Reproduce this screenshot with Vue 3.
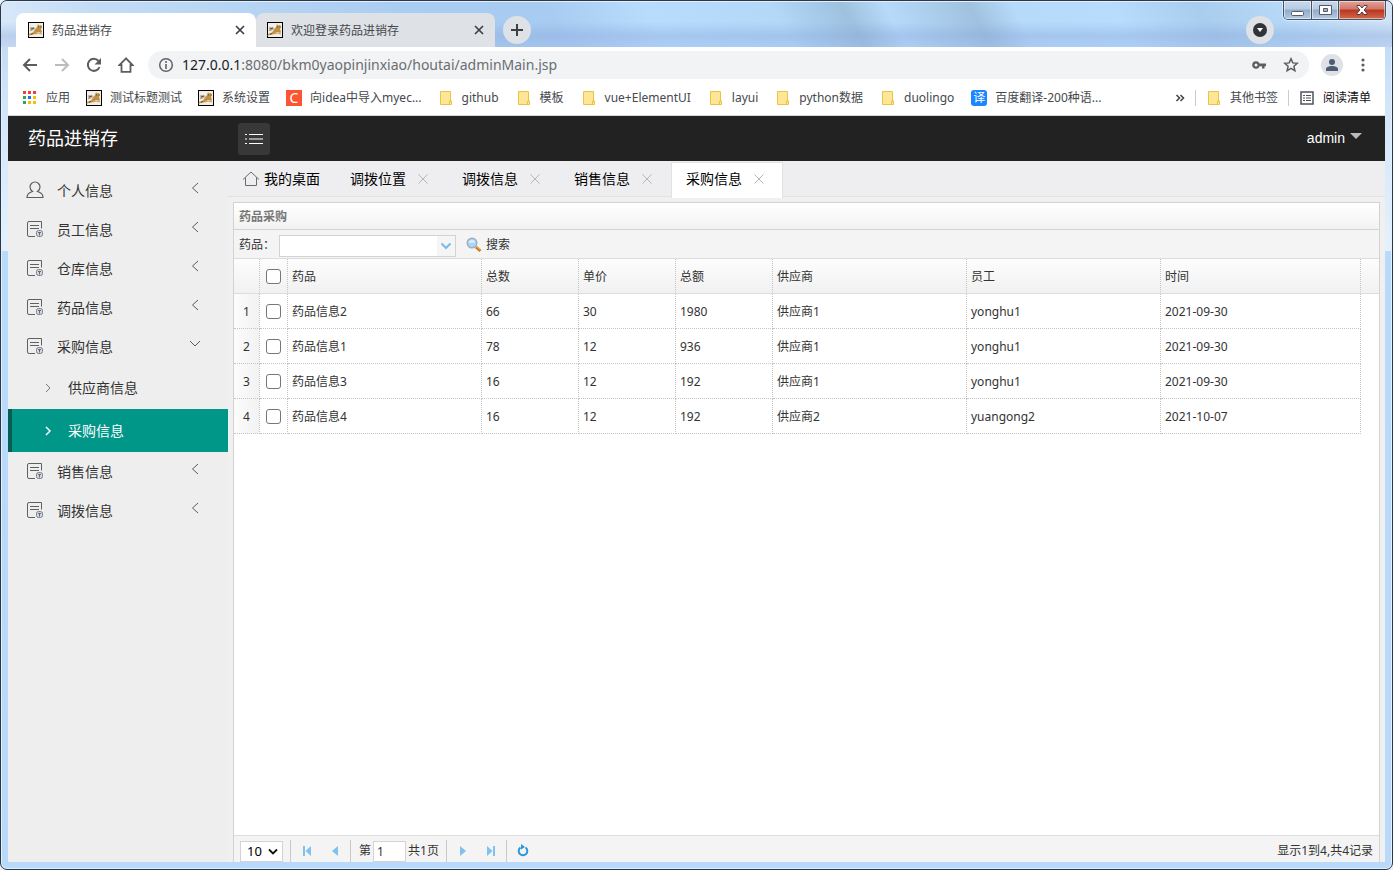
<script setup>
import { ref } from 'vue'

const browserTabs = [
  { title: '药品进销存', active: true },
  { title: '欢迎登录药品进销存', active: false },
]

const bookmarks = [
  { icon: 'apps', label: '应用' },
  { icon: 'cat', label: '测试标题测试' },
  { icon: 'cat', label: '系统设置' },
  { icon: 'c', label: '向idea中导入myec...' },
  { icon: 'folder', label: 'github' },
  { icon: 'folder', label: '模板' },
  { icon: 'folder', label: 'vue+ElementUI' },
  { icon: 'folder', label: 'layui' },
  { icon: 'folder', label: 'python数据' },
  { icon: 'folder', label: 'duolingo' },
  { icon: 'yi', label: '百度翻译-200种语...' },
]

const appDots = [
  '#ea4335', '#ea4335', '#ea4335',
  '#34a853', '#1a73e8', '#fbbc04',
  '#34a853', '#fbbc04', '#fbbc04',
]

const menu = [
  { label: '个人信息', icon: 'user' },
  { label: '员工信息', icon: 'doc' },
  { label: '仓库信息', icon: 'doc' },
  { label: '药品信息', icon: 'doc' },
  {
    label: '采购信息',
    icon: 'doc',
    open: true,
    children: [
      { label: '供应商信息' },
      { label: '采购信息', active: true },
    ],
  },
  { label: '销售信息', icon: 'doc' },
  { label: '调拨信息', icon: 'doc' },
]

const pageTabs = [
  { label: '调拨位置' },
  { label: '调拨信息' },
  { label: '销售信息' },
  { label: '采购信息', active: true },
]

const columns = ['药品', '总数', '单价', '总额', '供应商', '员工', '时间']
const rows = [
  ['药品信息2', '66', '30', '1980', '供应商1', 'yonghu1', '2021-09-30'],
  ['药品信息1', '78', '12', '936', '供应商1', 'yonghu1', '2021-09-30'],
  ['药品信息3', '16', '12', '192', '供应商1', 'yonghu1', '2021-09-30'],
  ['药品信息4', '16', '12', '192', '供应商2', 'yuangong2', '2021-10-07'],
]

const url = ref('127.0.0.1:8080/bkm0yaopinjinxiao/houtai/adminMain.jsp')
const drug = ref('')
const page = ref('1')
const pageSize = ref('10')
</script>

<template>
  <div class="window">
    <svg class="defs" width="0" height="0" aria-hidden="true">
      <symbol id="cat" viewBox="0 0 16 16">
        <rect width="16" height="16" fill="#000" />
        <rect x="1" y="1" width="14" height="14" fill="#f1efea" />
        <path d="M2 5l4 0 2 2-4 2-2 0z" fill="#b9b9b6" />
        <path d="M9 5l1-3 1 1.500 2-.5 1 2-1 2 1 3-1 1-2-1-2 .5-3 2-3 0-1 1-2 0 2-2 3-1z" fill="#c08f42" />
        <path d="M7 12l3-1 4 1M2 9l3-2" stroke="#d0a04a" fill="none" />
        <path d="M10 5h1M12.500 5h1M3 7l3-1M3 12.500l2-1" stroke="#5f4c30" />
      </symbol>
      <symbol id="folder" viewBox="0 0 16 16">
        <path d="M2.500 1.500h10v9.500h1v3.500h-11z" fill="#ffe694" stroke="#e8c547" />
        <path d="M11.500 14v-3h2" fill="none" stroke="#e8c547" />
      </symbol>
      <symbol id="doc" viewBox="0 0 18 18">
        <path d="M15.500 8.500V1.500H3A1.500 1.500 0 0 0 1.500 3v12A1.500 1.500 0 0 0 3 16.500h6M4 5.500h9M4 8.500h9" fill="none" stroke="#606060" />
        <rect x="10.500" y="10.500" width="6" height="6" rx="2" fill="#d3d8e0" stroke="#7b828e" />
        <path d="M12 12.500h3M13.500 12v3.500" stroke="#686868" />
      </symbol>
      <symbol id="user" viewBox="0 0 18 18">
        <path d="M6.500 10.500C5 9.500 4 8 4 6a5 5 0 0 1 10 0c0 2-1 3.500-2.500 4.500C15 11.500 17 13.500 17 16.500H1c0-3 2-5 5.500-6z" fill="none" stroke="#5d5d5d" stroke-width="1.200" />
      </symbol>
    </svg>

    <header class="strip">
      <nav class="browser-tabs" aria-label="浏览器标签">
        <div v-for="t in browserTabs" :key="t.title" class="browser-tab" :class="{ active: t.active }">
          <svg class="i16"><use href="#cat" /></svg>
          <span>{{ t.title }}</span>
          <button class="plain" aria-label="关闭标签">
            <svg width="16" height="16" viewBox="0 0 16 16"><path d="M4 4l8 8M12 4l-8 8" stroke="#3c4043" stroke-width="1.700" /></svg>
          </button>
        </div>
      </nav>
      <button class="round" aria-label="新标签页">
        <svg width="14" height="14" viewBox="0 0 14 14"><path d="M7 1v12M1 7h12" stroke="#3c4043" stroke-width="2" /></svg>
      </button>
      <button class="round search-tabs" aria-label="搜索标签页">
        <svg width="14" height="14" viewBox="0 0 14 14"><circle cx="7" cy="7" r="7" fill="#303438" /><path d="M4 5h6l-3 4z" fill="#fff" /></svg>
      </button>
      <div class="controls">
        <button class="ctl" aria-label="最小化">
          <svg width="13" height="16" viewBox="0 0 13 16"><rect x=".5" y="9.500" width="12" height="4" rx="1" fill="#fff" stroke="#535b6b" /></svg>
        </button>
        <button class="ctl" aria-label="最大化">
          <svg width="13" height="16" viewBox="0 0 13 16"><path d="M.5 3.500h12v9h-12z" fill="#fff" stroke="#535b6b" /><path d="M4.500 6.500h4v3h-4z" fill="#9fb4cd" stroke="#535b6b" /></svg>
        </button>
        <button class="ctl close" aria-label="关闭">
          <svg width="14" height="16" viewBox="0 0 14 16"><path d="M2 3.500h3l2 2.500 2-2.500h3v1L9.200 8l2.800 3.500v1H9L7 10l-2 2.500H2v-1L4.800 8 2 4.500z" fill="#fff" stroke="#53383f" /></svg>
        </button>
      </div>
    </header>

    <div class="client">
      <div class="toolbar">
        <button class="plain" aria-label="后退"><svg width="16" height="16" viewBox="0 0 16 16"><path d="M15 8H2M8 2L2 8l6 6" fill="none" stroke="#5a5e63" stroke-width="2" /></svg></button>
        <button class="plain" aria-label="前进"><svg width="16" height="16" viewBox="0 0 16 16"><path d="M1 8h13M8 2l6 6-6 6" fill="none" stroke="#babcbe" stroke-width="2" /></svg></button>
        <button class="plain" aria-label="刷新"><svg width="16" height="16" viewBox="0 0 16 16"><path d="M13.500 10A6 6 0 1 1 12.500 4" fill="none" stroke="#5a5e63" stroke-width="2" /><path d="M15 1v6.500H8.500z" fill="#5a5e63" /></svg></button>
        <button class="plain" aria-label="主页"><svg width="16" height="16" viewBox="0 0 16 16"><path d="M8 1.300L1.500 8H3.500v6.800h9V8h2z" fill="none" stroke="#5a5e63" stroke-width="1.800" /></svg></button>
        <div class="omnibox">
          <svg width="16" height="16" viewBox="0 0 16 16"><circle cx="8" cy="8" r="6.300" fill="none" stroke="#5f6368" stroke-width="1.500" /><path d="M8 4v2M8 7v5" stroke="#5f6368" stroke-width="1.600" /></svg>
          <label class="url">
            <input v-model="url" aria-label="地址" />
            <span class="shown" aria-hidden="true"><b>{{ url.slice(0, 9) }}</b>{{ url.slice(9) }}</span>
          </label>
          <button class="plain" aria-label="密码"><svg width="16" height="16" viewBox="0 0 16 16"><path d="M5 4.200a3.800 3.800 0 1 0 3.600 5H11v2.300h2.500V9.200H15V6.500H8.600A3.800 3.800 0 0 0 5 4.200zm0 2.300a1.500 1.500 0 1 1 0 3 1.500 1.500 0 0 1 0-3z" fill="#5a5e63" /></svg></button>
          <button class="plain star" aria-label="收藏"><svg width="16" height="16" viewBox="0 0 16 16"><path d="M8 1.800l1.800 4.100 4.500.4-3.400 3 1 4.400L8 11.400l-3.900 2.300 1-4.400-3.400-3 4.500-.4z" fill="none" stroke="#5a5e63" stroke-width="1.500" /></svg></button>
        </div>
        <button class="avatar" aria-label="用户"><svg width="14" height="14" viewBox="0 0 14 14"><circle cx="7" cy="4" r="3" fill="#4f5b73" /><path d="M1 13v-2c0-2 3-3 6-3s6 1 6 3v2z" fill="#4f5b73" /></svg></button>
        <button class="plain" aria-label="菜单"><svg width="16" height="16" viewBox="0 0 16 16"><g fill="#5a5e63"><circle cx="8" cy="3" r="1.600" /><circle cx="8" cy="8" r="1.600" /><circle cx="8" cy="13" r="1.600" /></g></svg></button>
      </div>

      <nav class="bookmarks" aria-label="书签">
        <a v-for="(b, i) in bookmarks" :key="i" href="#" :class="b.icon">
          <svg v-if="b.icon === 'apps'" class="i16" viewBox="0 0 16 16">
            <rect v-for="(c, n) in appDots" :key="n" :x="1 + (n % 3) * 5" :y="1 + Math.floor(n / 3) * 5" width="3" height="3" :fill="c" />
          </svg>
          <span v-else-if="b.icon === 'c'" class="badge red">C</span>
          <span v-else-if="b.icon === 'yi'" class="badge blue">译</span>
          <svg v-else class="i16"><use :href="'#' + b.icon" /></svg>
          <span>{{ b.label }}</span>
        </a>
        <div class="right">
          <button class="plain" aria-label="更多书签"><svg width="10" height="10" viewBox="0 0 10 10"><path d="M1.500 2l3 3-3 3M5.500 2l3 3-3 3" fill="none" stroke="#45494d" stroke-width="1.600" /></svg></button>
          <i class="rule"></i>
          <a href="#"><svg class="i16"><use href="#folder" /></svg><span>其他书签</span></a>
          <i class="rule"></i>
          <a href="#"><svg class="i16" viewBox="0 0 16 16"><rect x="2" y="2" width="12" height="12" fill="none" stroke="#4f5358" stroke-width="1.500" /><path d="M4 5.500h2M7 5.500h5M4 8h2M7 8h5M4 10.500h2M7 10.500h5" stroke="#4f5358" stroke-width="1.200" /></svg><span class="dark">阅读清单</span></a>
        </div>
      </nav>

      <div class="app-head">
        <h1>药品进销存</h1>
        <button class="burger" aria-label="折叠菜单">
          <svg width="18" height="12" viewBox="0 0 18 12"><path d="M4 1.500h14M4 6h14M4 10.500h14M0 1.500h2M0 6h2M0 10.500h2" stroke="#fff" stroke-width="1.200" /></svg>
        </button>
        <button class="admin">admin <i></i></button>
      </div>

      <div class="body">
        <aside>
          <ul>
            <li v-for="m in menu" :key="m.label">
              <a class="item" href="#">
                <svg class="i18"><use :href="'#' + m.icon" /></svg>
                <span>{{ m.label }}</span>
                <svg class="arrow" width="12" height="12" viewBox="0 0 12 12">
                  <path :d="m.open ? 'M1 3l5 5 5-5' : 'M9 1L3.500 6 9 11'" fill="none" stroke="#5a5a5a" />
                </svg>
              </a>
              <ul v-if="m.children">
                <li v-for="c in m.children" :key="c.label">
                  <a class="sub" :class="{ active: c.active }" href="#">
                    <svg width="8" height="10" viewBox="0 0 8 10"><path d="M2 1l4 4-4 4" fill="none" /></svg>
                    <span>{{ c.label }}</span>
                  </a>
                </li>
              </ul>
            </li>
          </ul>
        </aside>

        <main>
          <nav class="page-tabs" aria-label="页面标签">
            <a href="#" class="home">
              <svg width="18" height="16" viewBox="0 0 18 16"><path d="M1 8.500L9 1l8 7.500M3.500 6.500v8h11v-8" fill="none" stroke="#6b6b6b" /></svg>
              <span>我的桌面</span>
            </a>
            <div v-for="t in pageTabs" :key="t.label" class="page-tab" :class="{ active: t.active }">
              <a href="#">{{ t.label }}</a>
              <button class="plain" :aria-label="'关闭' + t.label">
                <svg width="14" height="14" viewBox="0 0 14 14"><path d="M2.500 2.500l9 9M11.500 2.500l-9 9" stroke="#b5b5b5" /></svg>
              </button>
            </div>
          </nav>

          <section class="panel">
            <h2>药品采购</h2>
            <form class="filter" @submit.prevent>
              <label for="drug">药品：</label>
              <div class="combo">
                <input id="drug" v-model="drug" type="text" />
                <button type="button" aria-label="展开"><svg width="12" height="8" viewBox="0 0 12 8"><path d="M1.500 1.500L6 6l4.500-4.500" fill="none" stroke="#74bdf0" stroke-width="2" /></svg></button>
              </div>
              <button type="submit" class="search">
                <svg width="16" height="16" viewBox="0 0 16 16"><path d="M10 10l4.500 4" stroke="#c9761c" stroke-width="3" /><path d="M10.500 9.500l4 3.500" stroke="#f3bd61" stroke-width="1" /><circle cx="6" cy="6" r="4.800" fill="#a9d7fb" stroke="#a3adb8" stroke-width="1.400" /><path d="M3 5.500a3 2.300 0 0 1 6 0z" fill="#e4f4ff" /></svg>
                <span>搜索</span>
              </button>
            </form>

            <div class="grid">
              <table>
                <colgroup>
                  <col class="w-num" /><col class="w-chk" /><col class="w-wide" /><col class="w-slim" /><col class="w-slim" /><col class="w-slim" /><col class="w-wide" /><col class="w-wide" /><col /><col class="w-end" />
                </colgroup>
                <thead>
                  <tr>
                    <th></th>
                    <th class="chk"><input type="checkbox" aria-label="全选" /></th>
                    <th v-for="c in columns" :key="c">{{ c }}</th>
                    <th class="end"></th>
                  </tr>
                </thead>
                <tbody>
                  <tr v-for="(r, i) in rows" :key="i">
                    <td class="num">{{ i + 1 }}</td>
                    <td class="chk"><input type="checkbox" :aria-label="'选择' + r[0]" /></td>
                    <td v-for="(v, n) in r" :key="n">{{ v }}</td>
                    <td class="end"></td>
                  </tr>
                </tbody>
              </table>
            </div>

            <footer class="pager">
              <div class="size">
                <select v-model="pageSize" aria-label="每页条数"><option>10</option><option>20</option><option>50</option></select>
                <svg width="10" height="7" viewBox="0 0 10 7"><path d="M1 1.500l4 4 4-4" fill="none" stroke="#111" stroke-width="1.800" /></svg>
              </div>
              <i class="bar"></i>
              <button class="plain" aria-label="首页"><svg width="16" height="16" viewBox="0 0 16 16"><path d="M4 3h2v10H4zM12 3v10L6.500 8z" fill="#80c1ee" /></svg></button>
              <button class="plain" aria-label="上一页"><svg width="16" height="16" viewBox="0 0 16 16"><path d="M11 3v10L5 8z" fill="#80c1ee" /></svg></button>
              <i class="bar"></i>
              <label class="page">第<input v-model="page" type="text" /></label>
              <span class="total">共1页</span>
              <i class="bar"></i>
              <button class="plain" aria-label="下一页"><svg width="16" height="16" viewBox="0 0 16 16"><path d="M5 3v10l6-5z" fill="#80c1ee" /></svg></button>
              <button class="plain" aria-label="末页"><svg width="16" height="16" viewBox="0 0 16 16"><path d="M10 3h2v10h-2zM4 3v10l5.500-5z" fill="#80c1ee" /></svg></button>
              <i class="bar"></i>
              <button class="plain" aria-label="刷新列表"><svg width="16" height="16" viewBox="0 0 16 16"><path d="M5.500 4.500a4.300 4.300 0 1 0 5 0" fill="none" stroke="#2b95dd" stroke-width="2" /><path d="M6 1v5.500L10 4z" fill="#2b95dd" /></svg></button>
              <span class="info">显示1到4,共4记录</span>
            </footer>
          </section>
        </main>
      </div>
    </div>
  </div>
</template>

<style>
body {
  margin: 0;
  background: #e9f0f7;
}
</style>

<style scoped>
* {
  box-sizing: border-box;
}
.window {
  display: flex;
  flex-direction: column;
  height: 100vh;
  padding: 0 7px 7px;
  overflow: hidden;
  border: 1px solid #2b3648;
  border-radius: 7px;
  box-shadow: inset 0 0 0 1px #e3f1ff;
  background:
    linear-gradient(180deg, #c3dcf5 0, #d3e6f9 60px, #eaf4fe 250px, transparent 250px) 0 46px / 100% 204px no-repeat,
    linear-gradient(#b8dafb, #b8d9fa);
  font-family: "Noto Sans", "Noto Sans CJK SC", sans-serif;
  font-size: 12px;
  line-height: 18px;
  color: #333;
}
.defs {
  position: absolute;
}
button,
input,
select {
  font: inherit;
  color: inherit;
}
button {
  padding: 0;
  border: 0;
  background: none;
}
svg {
  display: block;
  flex: none;
}
a {
  color: inherit;
  text-decoration: none;
}
ul {
  margin: 0;
  padding: 0;
  list-style: none;
}
i {
  flex: none;
}
.i16 {
  width: 16px;
  height: 16px;
}
.i18 {
  width: 18px;
  height: 18px;
}

/* title strip */
.strip {
  display: flex;
  flex: none;
  align-items: flex-start;
  height: 46px;
  margin: 0 -7px;
  padding: 0 6px 0 15px;
  border-radius: 6px 6px 0 0;
  box-shadow: inset 0 1px 0 #e3f1ff;
  background:
    linear-gradient(180deg, transparent 45%, rgba(130, 160, 215, 0.35) 75%, rgba(150, 175, 225, 0.3)),
    linear-gradient(62deg, #dbeafa 0, #c3dcf5 8%, #a9cdf2 30%, #a8ccf1 40%, #b8dcfd 47%, #b3d8f8 56%, #9dc1df 61%, #b8dafa 64%, #a0c2e0 70%, #b6dafa 73%, #b8dcfd 80%, #a9cdee 86%, #b7d9f8 92%, #d3e4f6);
}
.browser-tabs {
  display: flex;
  align-self: flex-end;
}
.browser-tab {
  display: flex;
  align-items: center;
  gap: 8px;
  width: 240px;
  height: 34px;
  padding: 0 8px 0 12px;
  border-radius: 8px 8px 0 0;
  background: #dee1e6;
  color: #45494d;
}
.browser-tab:last-child {
  width: 239px;
  padding-left: 11px;
}
.browser-tab.active {
  background: #fff;
}
.browser-tab span {
  padding-top: 2px;
}
.browser-tab button {
  margin-left: auto;
}
.round {
  display: grid;
  place-items: center;
  flex: none;
  width: 28px;
  height: 28px;
  margin: 15px 0 0 8px;
  border-radius: 50%;
  background: #dee1e6;
}
.search-tabs {
  margin-left: auto;
}
.controls {
  display: flex;
  margin-left: 9px;
  overflow: hidden;
  border: 1px solid #46546a;
  border-top: 0;
  border-radius: 0 0 5px 5px;
  box-shadow: 0 0 0 1px #d9ebfc;
}
.ctl {
  display: grid;
  place-items: center;
  width: 28px;
  height: 18px;
  border-right: 1px solid #46546a;
  box-shadow: inset 0 0 0 1px rgba(255, 255, 255, 0.5);
  background: linear-gradient(#c8daec 0, #b6cbe2 45%, #91abc9 50%, #b4cbe3);
}
.ctl:nth-child(2) {
  width: 27px;
}
.ctl.close {
  width: 46px;
  border-right: 0;
  background: linear-gradient(#e4a498 0, #d0766a 45%, #b8361f 50%, #d4694a);
}

/* browser chrome */
.client {
  display: flex;
  flex: 1;
  flex-direction: column;
  min-height: 0;
  background: #fff;
}
.toolbar {
  display: flex;
  flex: none;
  align-items: center;
  gap: 16px;
  height: 36px;
  padding: 0 14px;
}
.omnibox {
  display: flex;
  flex: 1;
  align-items: center;
  gap: 8px;
  height: 28px;
  margin: 0 -4px 0 -2px;
  padding: 0 10px;
  border-radius: 14px;
  background: #f1f3f4;
}
.url {
  display: grid;
  flex: 1;
  align-items: center;
  font-size: 14px;
  line-height: 20px;
  color: #6a6e72;
}
.url input,
.url .shown {
  grid-area: 1 / 1;
}
.url input {
  width: 100%;
  padding: 0;
  border: 0;
  background: none;
  color: transparent;
}
.shown {
  pointer-events: none;
}
.shown b {
  font-weight: 400;
  color: #202124;
}
.star {
  margin-left: 8px;
}
.avatar {
  display: grid;
  place-items: center;
  width: 22px;
  height: 22px;
  border-radius: 50%;
  background: #dee1e6;
}
.avatar + button {
  margin-left: -4px;
}
.bookmarks {
  display: flex;
  flex: none;
  align-items: center;
  gap: 16px;
  height: 33px;
  padding: 0 14px 2px;
  border-bottom: 1px solid #d4d4d4;
  color: #45494d;
  white-space: nowrap;
}
.bookmarks a {
  display: flex;
  align-items: center;
  gap: 8px;
}
.bookmarks .folder {
  margin-right: 1px;
}
.badge {
  width: 16px;
  height: 16px;
  text-align: center;
  line-height: 16px;
  color: #fff;
}
.badge.red {
  background: #fc5531;
  font-size: 14px;
}
.badge.blue {
  border-radius: 3px;
  background: #1a86ff;
}
.right {
  display: flex;
  align-items: center;
  gap: 10px;
  margin-left: auto;
}
.rule {
  width: 1px;
  height: 16px;
  background: #ccc;
}
.dark {
  color: #111;
}

/* application header */
.app-head {
  display: flex;
  flex: none;
  align-items: center;
  height: 45px;
  background: #222;
  color: #fff;
}
h1 {
  width: 220px;
  margin: 0;
  padding: 0 0 2px 20px;
  font-size: 18px;
  font-weight: 400;
  line-height: 26px;
}
.burger {
  display: grid;
  place-items: center;
  width: 32px;
  height: 32px;
  margin-left: 10px;
  border-radius: 3px;
  background: #383838;
}
.admin {
  display: flex;
  align-items: center;
  gap: 5px;
  margin-left: auto;
  padding: 0 23px 2px 0;
  font-family: "Liberation Sans", sans-serif;
  font-size: 14px;
}
.admin i {
  margin-bottom: 4px;
  border: 6px solid transparent;
  border-top-color: #bbb;
  border-bottom: 0;
}

/* sidebar */
.body {
  display: flex;
  flex: 1;
  min-height: 0;
}
aside {
  flex: none;
  width: 220px;
  padding-top: 10px;
  background: #eee;
  font-size: 14px;
}
.item {
  display: flex;
  align-items: center;
  gap: 13px;
  height: 39px;
  padding: 0 27px 1px 18px;
}
.item span {
  padding-top: 2px;
}
.arrow {
  margin: 0 0 4px auto;
}
.sub {
  display: flex;
  align-items: center;
  gap: 16px;
  height: 43px;
  padding-left: 32px;
  border-left: 4px solid transparent;
}
.sub svg {
  stroke: #777;
}
.sub.active {
  border-color: #075c54;
  background: #009688;
  color: #fff;
}
.sub.active svg {
  stroke: #fff;
  stroke-width: 1.5;
}

/* page tabs */
main {
  display: flex;
  flex: 1;
  flex-direction: column;
  min-width: 0;
  background: #f0f0f0;
}
.page-tabs {
  display: flex;
  flex: none;
  height: 36px;
  padding-top: 1px;
  border-bottom: 1px solid #e2e2e2;
  background: #eeeef0;
  font-size: 14px;
  color: #000;
}
.home,
.page-tab {
  display: flex;
  align-items: center;
  padding: 0 14px 3px;
  border: 1px solid transparent;
  border-bottom: 0;
}
.home {
  gap: 4px;
  padding-bottom: 2px;
  padding-left: 13px;
}
.page-tab {
  gap: 10px;
  width: 112px;
  height: 36px;
}
.page-tab.active {
  border-color: #e2e2e2;
  background: #fff;
}

/* data panel */
.panel {
  display: flex;
  flex: 1;
  flex-direction: column;
  min-height: 0;
  margin: 5px 5px 0;
  border: 1px solid #d3d3d3;
  border-bottom: 0;
  background: #fff;
}
h2 {
  flex: none;
  margin: 0;
  padding: 5px 5px 3px;
  border-bottom: 1px solid #d3d3d3;
  background: linear-gradient(#fff, #f2f2f2);
  font-size: 12px;
  font-weight: 700;
  line-height: 18px;
  color: #777;
}
.filter {
  display: flex;
  flex: none;
  align-items: center;
  height: 29px;
  padding: 2px 0 0 5px;
  border-bottom: 1px solid #ddd;
  background: #f4f4f4;
}
.filter label {
  width: 40px;
}
.combo {
  display: flex;
  width: 177px;
  height: 22px;
  margin-top: 2px;
  border: 1px solid #d3d3d3;
  background: #fff;
}
.combo input {
  flex: 1;
  min-width: 0;
  padding: 0 4px;
  border: 0;
  background: none;
}
.combo button {
  display: grid;
  place-items: center;
  width: 18px;
  background: #f5f5f5;
}
.search {
  display: flex;
  align-items: center;
  gap: 4px;
  margin-left: 10px;
}
.grid {
  flex: 1;
  min-height: 0;
  overflow: hidden;
}
table {
  width: 100%;
  table-layout: fixed;
  border-spacing: 0;
}
.w-num {
  width: 26px;
}
.w-chk {
  width: 28px;
}
.w-wide {
  width: 194px;
}
.w-slim {
  width: 97px;
}
.w-end {
  width: 18px;
}
th,
td {
  height: 35px;
  padding: 2px 4px 0;
  border-right: 1px dotted #c4c4c4;
  border-bottom: 1px dotted #c4c4c4;
  text-align: left;
  font-weight: 400;
}
th {
  border-bottom: 1px solid #ddd;
  background: linear-gradient(#fdfdfd, #f1f1f1);
}
.num {
  background: linear-gradient(90deg, #fcfcfc, #f2f2f2);
  text-align: center;
}
.chk {
  padding: 0;
}
.chk input {
  display: block;
  appearance: none;
  width: 15px;
  height: 15px;
  margin: 0 auto;
  border: 1px solid #767676;
  border-radius: 3px;
  background: #fff;
}
.end {
  border-right: 0;
}
td.end {
  border-bottom: 0;
}

/* pager */
.pager {
  display: flex;
  flex: none;
  align-items: center;
  height: 27px;
  padding: 4px 6px 0;
  overflow: hidden;
  border-top: 1px solid #ddd;
  background: #f4f4f4;
}
.size {
  display: grid;
  align-items: center;
  width: 43px;
  height: 21px;
}
.size select,
.size svg {
  grid-area: 1 / 1;
}
.size select {
  appearance: none;
  width: 100%;
  height: 21px;
  padding: 0 0 0 6px;
  border: 1px solid #d3d3d3;
  background: #fff;
  font-size: 13px;
  color: #000;
}
.size svg {
  justify-self: end;
  margin-right: 5px;
  pointer-events: none;
}
.bar {
  align-self: stretch;
  width: 1px;
  margin: 0 8px 0 7px;
  background: #c9c9c9;
}
.pager .plain {
  margin-right: 12px;
}
.pager .plain:has(+ .bar) {
  margin-right: 0;
}
.page {
  display: flex;
  align-items: center;
  gap: 2px;
}
.page input {
  width: 33px;
  height: 21px;
  padding: 0 3px;
  border: 1px solid #d3d3d3;
  background: #fff;
}
.total {
  margin-left: 2px;
}
.info {
  margin-left: auto;
}
</style>
